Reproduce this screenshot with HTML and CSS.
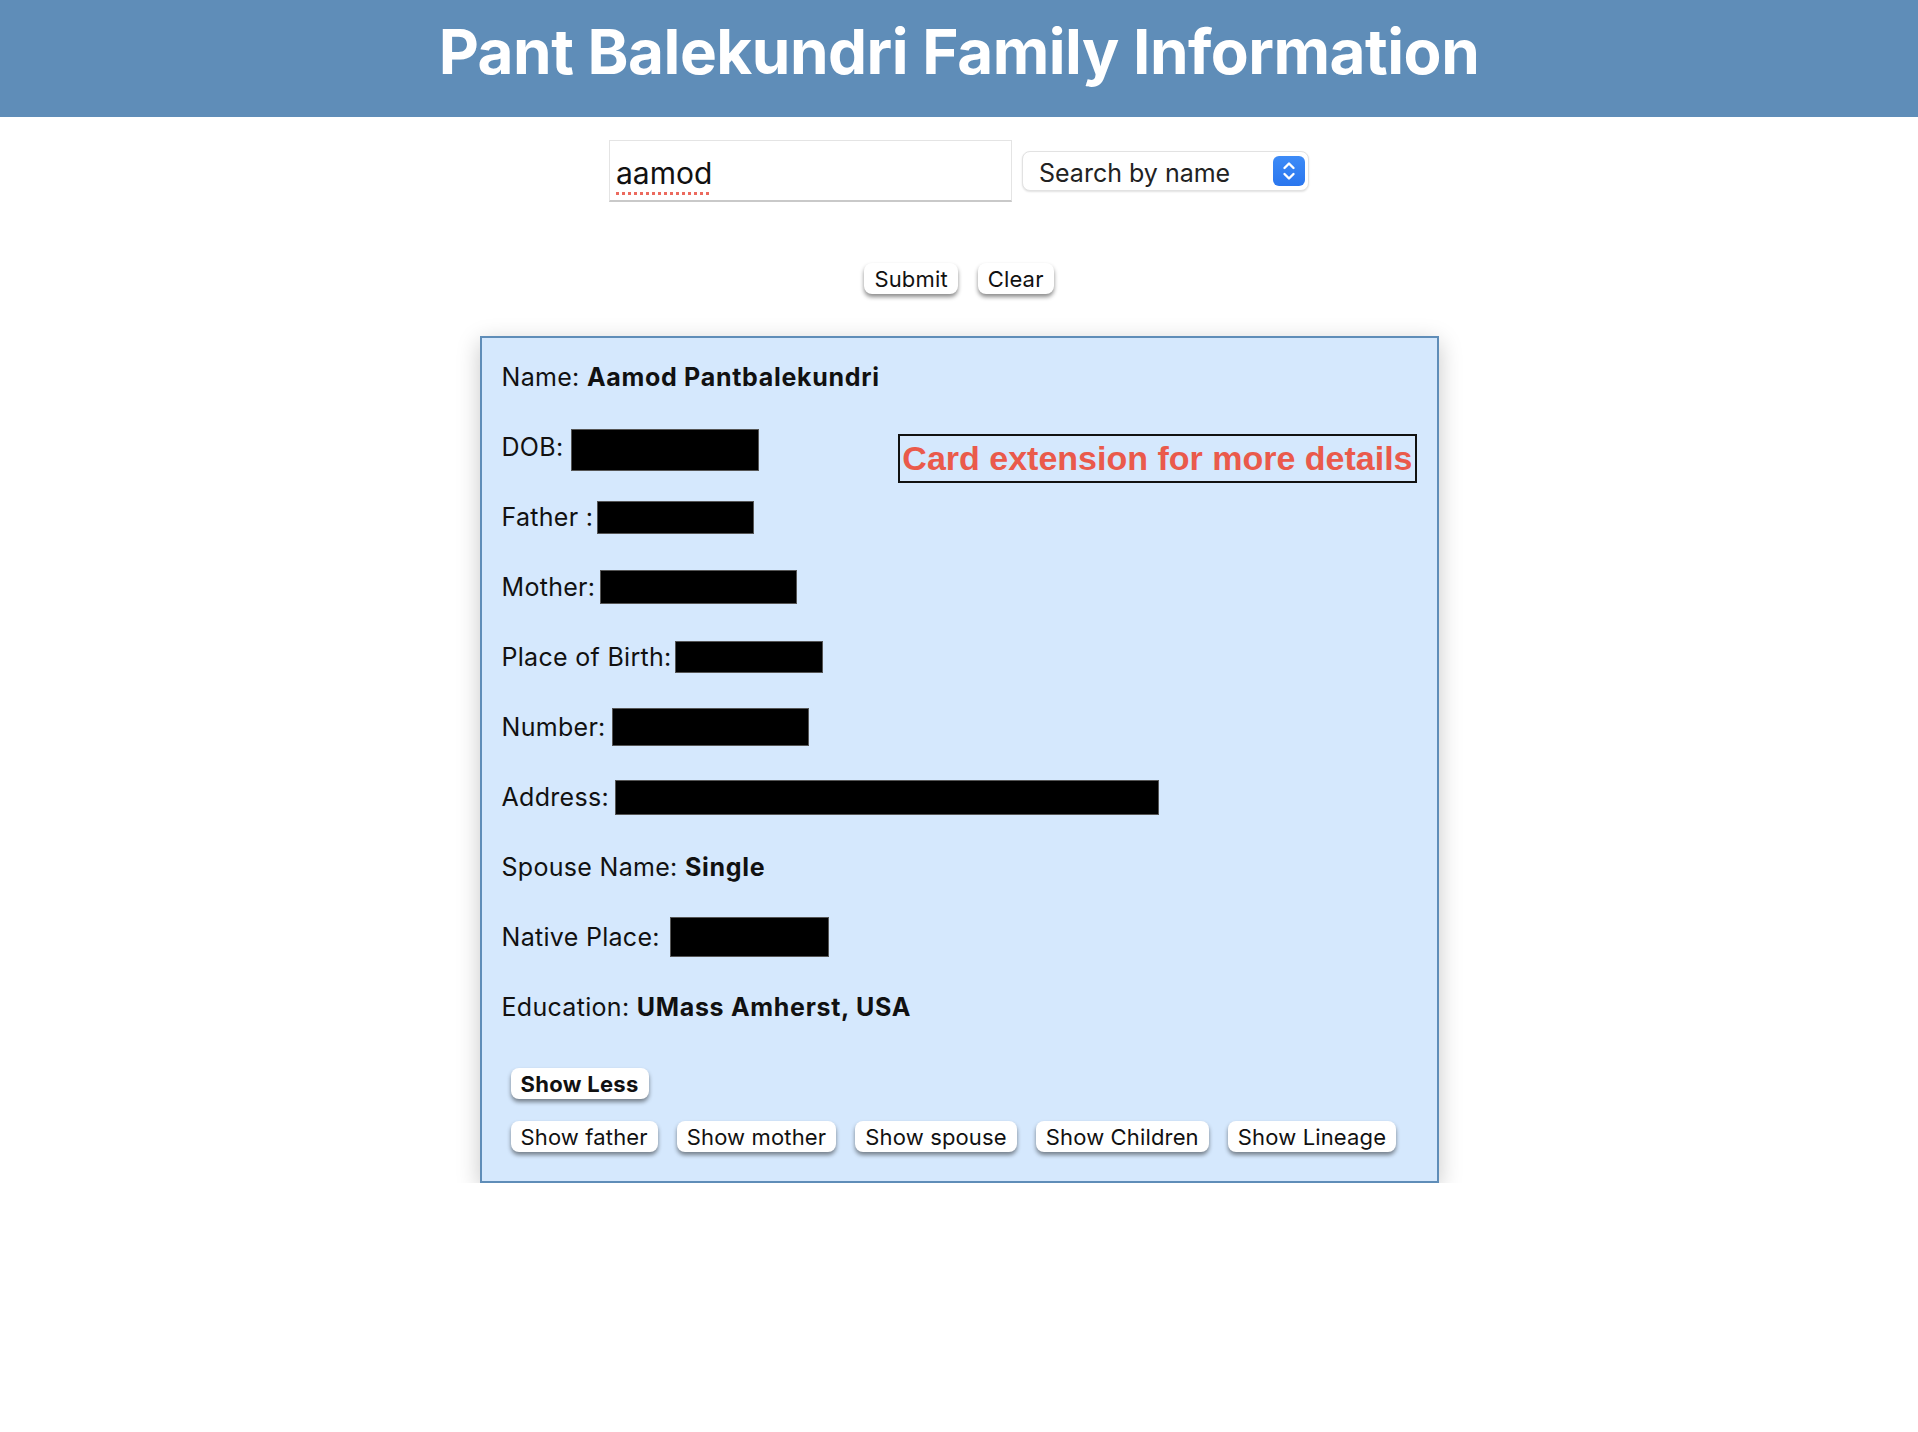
FILE: index.html
```html
<!DOCTYPE html>
<html lang="en">
<head>
<meta charset="utf-8">
<title>Pant Balekundri Family Information</title>
<link rel="stylesheet" href="styles.css">
</head>
<body>
<header class="banner">
  <h1 class="banner-title">Pant Balekundri Family Information</h1>
</header>

<main class="page">
  <div class="search-row">
    <div class="search-input"><span class="typed">aamod</span></div>
    <div class="search-select">
      <span class="select-label">Search by name</span>
      <span class="select-arrows">
        <svg width="32" height="30" viewBox="0 0 32 30" aria-hidden="true">
          <path d="M11.5 12 L16 7.5 L20.5 12" fill="none" stroke="#fff" stroke-width="2.4" stroke-linecap="round" stroke-linejoin="round"/>
          <path d="M11.5 18 L16 22.5 L20.5 18" fill="none" stroke="#fff" stroke-width="2.4" stroke-linecap="round" stroke-linejoin="round"/>
        </svg>
      </span>
    </div>
  </div>

  <div class="action-row">
    <button class="btn">Submit</button>
    <button class="btn">Clear</button>
  </div>

  <section class="card">
    <div class="row">Name:&nbsp;<b>Aamod Pantbalekundri</b></div>
    <div class="row">DOB:<span class="redact r-dob"></span>
      <div class="extension">Card extension for more details</div>
    </div>
    <div class="row">Father :<span class="redact r-father"></span></div>
    <div class="row">Mother:<span class="redact r-mother"></span></div>
    <div class="row">Place of Birth:<span class="redact r-place"></span></div>
    <div class="row">Number:<span class="redact r-number"></span></div>
    <div class="row">Address:<span class="redact r-address"></span></div>
    <div class="row">Spouse Name:&nbsp;<b>Single</b></div>
    <div class="row">Native Place:<span class="redact r-native"></span></div>
    <div class="row">Education:&nbsp;<b>UMass Amherst, USA</b></div>

    <div class="card-actions">
      <div class="btn-line">
        <button class="btn btn-bold">Show Less</button>
      </div>
      <div class="btn-line">
        <button class="btn">Show father</button>
        <button class="btn">Show mother</button>
        <button class="btn">Show spouse</button>
        <button class="btn">Show Children</button>
        <button class="btn">Show Lineage</button>
      </div>
    </div>
  </section>
</main>
</body>
</html>
```

FILE: styles.css
```css
* { box-sizing: border-box; }

body {
  margin: 0;
  background: #ffffff;
  font-family: Inter, "Noto Sans", "DejaVu Sans", sans-serif;
  color: #111;
}

.banner {
  height: 117px;
  background: #5f8db8;
  display: flex;
  align-items: center;
  justify-content: center;
  padding-bottom: 14px;
}

.banner-title {
  margin: 0;
  color: #fff;
  font-size: 62px;
  font-weight: 700;
  letter-spacing: -0.5px;
}

.page {
  display: flex;
  flex-direction: column;
  align-items: center;
}

.search-row {
  margin-top: 23px;
  display: flex;
  align-items: center;
  gap: 10px;
}

.search-input {
  width: 403px;
  height: 62px;
  border: 1px solid #e4e4e4;
  border-bottom: 2px solid #c9c9c9;
  background: #fff;
  padding: 5px 6px 0;
  display: flex;
  align-items: center;
  font-size: 30px;
  color: #111;
}

.typed {
  text-decoration: underline dotted #ec6a5e;
  text-decoration-thickness: 3px;
  text-underline-offset: 8px;
}

.search-select {
  width: 287px;
  height: 40px;
  border: 1px solid #e2e2e2;
  border-radius: 8px;
  background: #fff;
  box-shadow: 0 1px 2px rgba(0,0,0,0.12);
  display: flex;
  align-items: center;
  justify-content: space-between;
  padding: 0 3px 0 16px;
  font-size: 25px;
  color: #222;
}

.select-label { padding-top: 4px; }

.select-arrows {
  width: 32px;
  height: 30px;
  border-radius: 6px;
  background: linear-gradient(#3d8bf7, #2a76ee);
  display: flex;
}

.action-row {
  margin-top: 61px;
  display: flex;
  gap: 20px;
}

.btn {
  font-family: Inter, "Noto Sans", sans-serif;
  font-size: 22px;
  letter-spacing: 0.15px;
  color: #111;
  background: #fff;
  border: none;
  border-radius: 8px;
  height: 31px;
  padding: 0 10px;
  box-shadow: 0 3px 4px rgba(0,0,0,0.45);
}

.btn-bold { font-weight: 700; letter-spacing: 0.3px; }

.card {
  margin-top: 42px;
  width: 959px;
  background: #d5e8fd;
  border: 2px solid #5f8db8;
  box-shadow: 0 6px 22px rgba(0,0,0,0.22);
  padding: 4px 20px 29px 20px;
  font-size: 25px;
  letter-spacing: 0.3px;
}

.row {
  height: 70px;
  display: flex;
  align-items: center;
  white-space: pre;
}

.row b { font-weight: 700; letter-spacing: 0.7px; }

.redact {
  display: block;
  background: #000;
  border: 1px solid #555;
}

.r-dob { width: 188px; height: 42px; margin-left: 8px; margin-top: 6px; }
.r-father { width: 157px; height: 33px; margin-left: 4px; }
.r-mother { width: 197px; height: 34px; margin-left: 5px; }
.r-place { width: 148px; height: 32px; margin-left: 3px; }
.r-number { width: 197px; height: 38px; margin-left: 6px; }
.r-address { width: 544px; height: 35px; margin-left: 6px; }
.r-native { width: 159px; height: 40px; margin-left: 10px; }

.extension {
  margin-left: auto;
  margin-top: 23px;
  border: 2px solid #111;
  padding: 1px 2px;
  font-family: "Liberation Sans", Arial, sans-serif;
  font-weight: 700;
  font-size: 34px;
  letter-spacing: 0;
  color: #ea5a4b;
  line-height: 43px;
}

.card-actions {
  margin-top: 26px;
  padding-left: 9px;
  display: flex;
  flex-direction: column;
  gap: 22px;
}

.btn-line {
  display: flex;
  gap: 19px;
}
```
